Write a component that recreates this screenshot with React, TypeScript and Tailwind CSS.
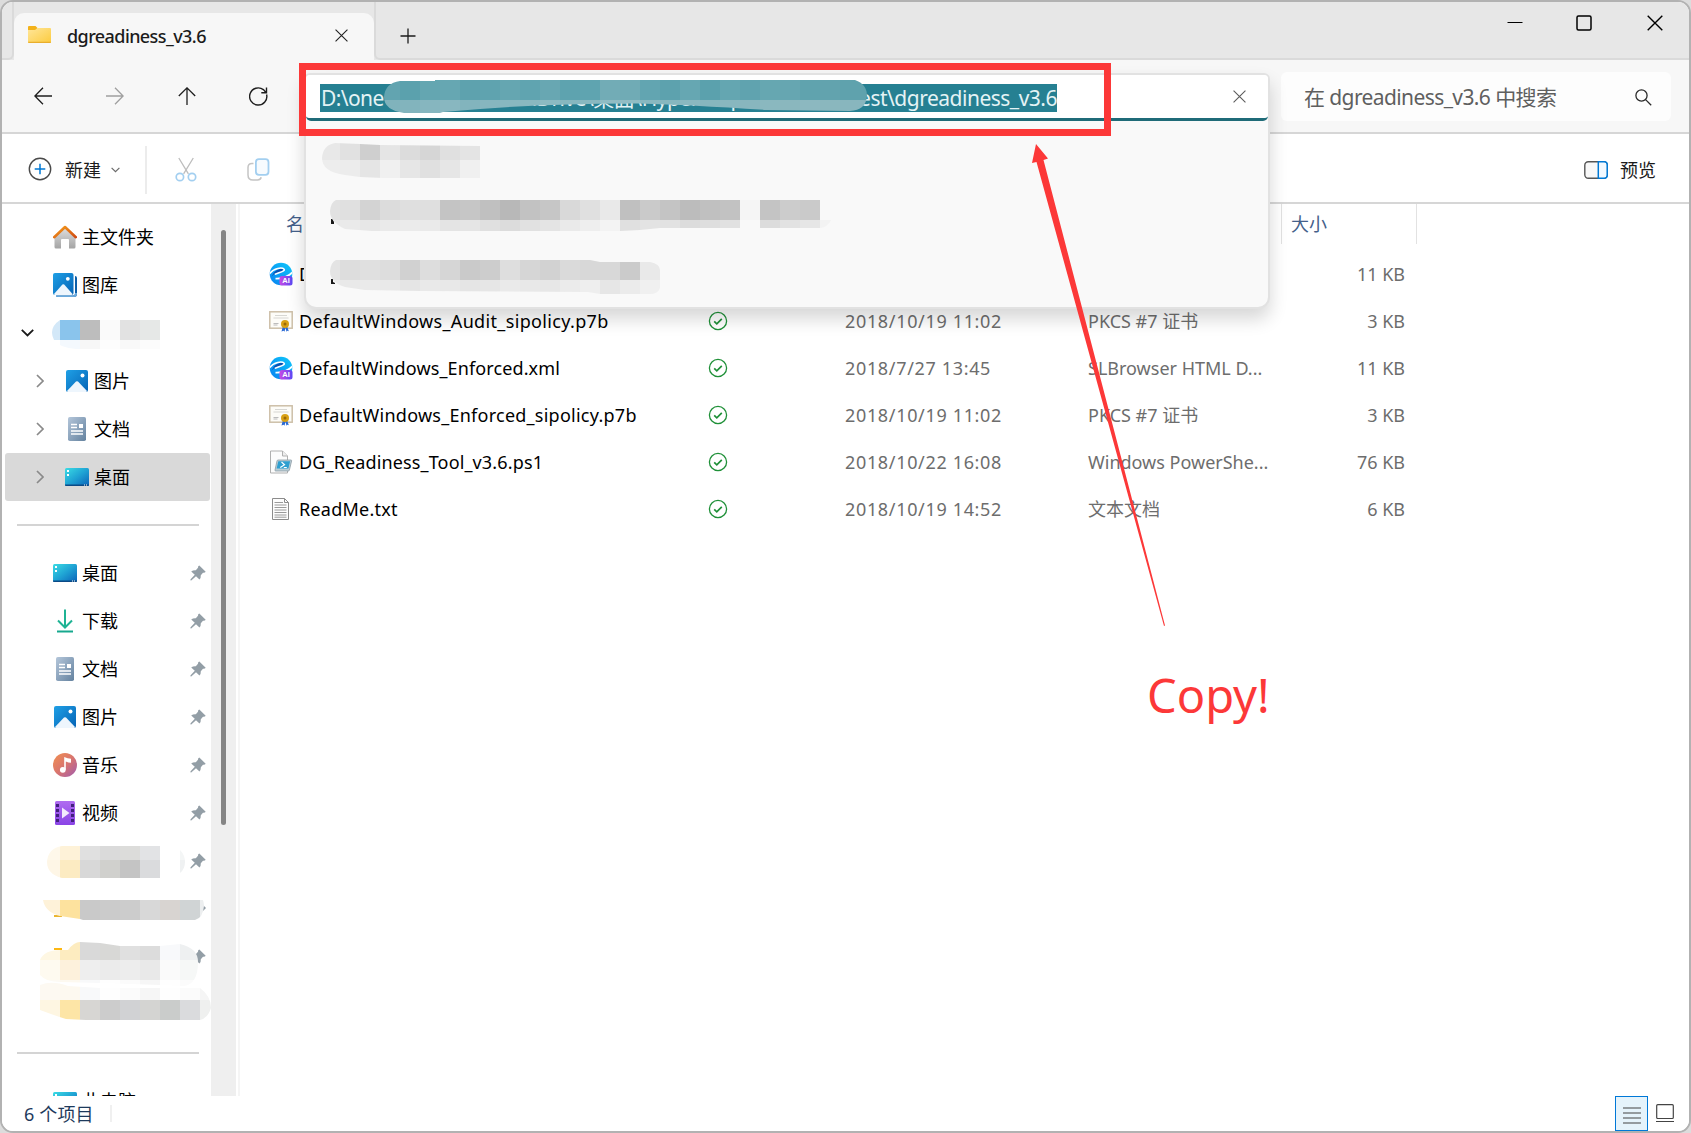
import React from "react";

type Cells = { x: number; y: number; c: string[] };

/* Pixelated redaction: 20px cells clipped to a brush outline. */
function Mosaic({ id, clip, rows }: { id: string; clip: string; rows: Cells[] }) {
  return (
    <g>
      <clipPath id={id}>
        <path d={clip} />
      </clipPath>
      <g clipPath={`url(#${id})`} shapeRendering="crispEdges">
        {rows.map((r) =>
          r.c.map((c, i) => (
            <rect key={`${r.y}-${i}`} x={r.x + i * 20} y={r.y} width={20} height={20} fill={`#${c}`} />
          ))
        )}
      </g>
    </g>
  );
}

const DesktopIcon = () => (
  <svg width="24" height="24" viewBox="0 0 24 24">
    <defs>
      <linearGradient id="desk" x1="0" y1="0" x2="1" y2="1">
        <stop offset="0" stopColor="#3bdce4" />
        <stop offset=".5" stopColor="#1fa3d4" />
        <stop offset="1" stopColor="#0a62b8" />
      </linearGradient>
    </defs>
    <rect x="0" y="3" width="24" height="18" rx="1.5" fill="url(#desk)" />
    <path d="M0 19.6h24v.4q0 1-1 1H1q-1 0-1-1z" fill="#0b4a86" />
    <path d="M2 5h2v2H2zM2 9h2v2H2z" fill="#fff" />
    <path d="M19 20h1M21 20h1" stroke="#fff" strokeWidth="1" />
  </svg>
);

const PictureIcon = () => (
  <svg width="24" height="24" viewBox="0 0 24 24">
    <defs>
      <linearGradient id="pic" x1="0" y1="0" x2="1" y2="1">
        <stop offset="0" stopColor="#1fa0e6" />
        <stop offset="1" stopColor="#0563b5" />
      </linearGradient>
    </defs>
    <rect x="1" y="1" width="22" height="22" rx="2" fill="url(#pic)" />
    <path d="M2 22 11 12.6q1-.9 2 0L22 22q-.4 1-1 1H3q-.6 0-1-1z" fill="#eef6fd" />
    <circle cx="17.5" cy="6.5" r="2" fill="#fff" />
  </svg>
);

const GalleryIcon = () => (
  <svg width="24" height="24" viewBox="0 0 24 24">
    <path d="M22 3q2 .2 2 2v16q0 3-3 3H5q-2 0-2-1.500h17q2 0 2-2z" fill="#0c5ea8" />
    <path d="M3 22.500h17q2 0 2-2V20h2v1q0 3-3 3H5q-2 0-2-1.500z" fill="#6aa9dc" />
    <rect x="0" y="0" width="20.500" height="22" rx="2" fill="url(#pic)" />
    <path d="M1 21 9.400 11.600q.9-.8 1.800 0L19.500 21q-.4 1-1 1H2q-.6 0-1-1z" fill="#eef6fd" />
    <circle cx="14.800" cy="5.800" r="1.900" fill="#fff" />
  </svg>
);

const DocIcon = () => (
  <svg width="24" height="24" viewBox="0 0 24 24">
    <defs>
      <linearGradient id="doc" x1="0" y1="0" x2="1" y2="1">
        <stop offset="0" stopColor="#b4c6da" />
        <stop offset="1" stopColor="#64829f" />
      </linearGradient>
    </defs>
    <rect x="3" y="0" width="18" height="24" rx="1.800" fill="url(#doc)" />
    <path d="M6 7.500h6M6 10.500h6M6 14h12M6 17h12" stroke="#fff" strokeWidth="1.300" />
    <rect x="14" y="7" width="4" height="4" fill="#fff" />
  </svg>
);

const HomeIcon = () => (
  <svg width="24" height="24" viewBox="0 0 24 24">
    <defs>
      <linearGradient id="homeb" x1="0" y1="0" x2="0" y2="1">
        <stop offset="0" stopColor="#dedede" />
        <stop offset="1" stopColor="#a4a4a4" />
      </linearGradient>
      <linearGradient id="homer" x1="0" y1="0" x2="1" y2="1">
        <stop offset="0" stopColor="#f6a01c" />
        <stop offset="1" stopColor="#d04a12" />
      </linearGradient>
    </defs>
    <path d="M1.500 11.500 12 3l10.500 8.500V22q0 1.500-1.500 1.500h-5V15q0-1-1-1H9q-1 0-1 1v8.500H3Q1.500 23.500 1.500 22z" fill="url(#homeb)" />
    <path d="M1.200 12.200 12 2l10.800 10.200" fill="none" stroke="url(#homer)" strokeWidth="2.600" strokeLinecap="round" strokeLinejoin="round" />
  </svg>
);

const DownloadIcon = () => (
  <svg width="24" height="24" viewBox="0 0 24 24" fill="none" strokeWidth="2">
    <path d="M12 .500V18M5 11.500l7 7 7-7" stroke="#1fb394" />
    <path d="M4 22.500h16" stroke="#17a88e" />
  </svg>
);

const MusicIcon = () => (
  <svg width="24" height="24" viewBox="0 0 24 24">
    <defs>
      <linearGradient id="mus" x1="0" y1="0" x2="1" y2="1">
        <stop offset="0" stopColor="#f29050" />
        <stop offset=".5" stopColor="#d9756e" />
        <stop offset="1" stopColor="#a05bb0" />
      </linearGradient>
    </defs>
    <circle cx="12" cy="12" r="12" fill="url(#mus)" />
    <circle cx="9.800" cy="16.800" r="2.900" fill="#fff" />
    <path d="M11.200 4q3.500 1.600 6.800 1.700v4q-2.600 0-5.200-1.200v8.300h-1.600z" fill="#fff" />
  </svg>
);

const VideoIcon = () => (
  <svg width="24" height="24" viewBox="0 0 24 24">
    <defs>
      <linearGradient id="vid" x1="0" y1="0" x2="0" y2="1">
        <stop offset="0" stopColor="#b06cf0" />
        <stop offset="1" stopColor="#8a44e6" />
      </linearGradient>
    </defs>
    <rect x="2" y="0" width="20" height="24" rx="1.500" fill="url(#vid)" />
    <path d="M3 3h3v3H3zM3 8h3v3H3zM3 13h3v3H3zM3 18h3v3H3zM18 3h3v3h-3zM18 8h3v3h-3zM18 13h3v3h-3zM18 18h3v3h-3z" fill="#43207e" />
    <path d="M9 6.500v11l7.500-5.500z" fill="#f2eafc" />
  </svg>
);

const Pin = () => (
  <svg width="16" height="16" viewBox="0 0 16 16">
    <path d="M9.300.600l6.400 6.200q-.7 1.200-2.700 1l-2.200 2.400q.2 2.800-1.300 4.400L6 11.300l-4.800 4.300-.9-.4.300-.9 4.200-4.500-3.600-3.200Q3 5 5.800 5.200L8 2.800Q7.800 1.200 9.300.600z" fill="#939ea6" />
  </svg>
);

const BrowserIcon = () => (
  <svg width="24" height="24" viewBox="0 0 24 24">
    <defs>
      <linearGradient id="br" x1="0" y1="1" x2="1" y2="0">
        <stop offset="0" stopColor="#0a7ff0" />
        <stop offset=".4" stopColor="#0a9cf4" />
        <stop offset="1" stopColor="#10ccfc" />
      </linearGradient>
      <linearGradient id="ai" x1="0" y1="0" x2="1" y2="0">
        <stop offset="0" stopColor="#c94ae4" />
        <stop offset="1" stopColor="#5a48f4" />
      </linearGradient>
      <clipPath id="ball"><circle cx="12" cy="12" r="11.300" /></clipPath>
    </defs>
    <g clipPath="url(#ball)">
      <rect width="24" height="24" fill="url(#br)" />
      <path d="M5 10.500Q9 6.500 13.500 6.800q2 .4.500 1.700-2 1.500-6 2.600-4 1.400-5.500 3.600z" fill="#0a50b4" />
      <path d="M.5 11.800C5 6 13 5 15.200 7.300 16.500 9.300 9 10.600 5.800 12.300" fill="none" stroke="#fff" strokeWidth="1.500" />
      <path d="M6.500 16.600C14 17 19.500 14.500 24.500 9.500" fill="none" stroke="#fff" strokeWidth="1.800" />
    </g>
    <rect x="10.500" y="14" width="13" height="9.500" rx="2.500" fill="url(#ai)" />
    <text x="17" y="21.400" fontSize="7.500" fontWeight="700" fill="#fff" textAnchor="middle" fontFamily="Liberation Sans, sans-serif">AI</text>
  </svg>
);

const CertIcon = () => (
  <svg width="24" height="24" viewBox="0 0 24 24">
    <rect x=".8" y="2.800" width="22.400" height="16.400" fill="#fdfcf8" stroke="#cdbfa8" strokeWidth="1.500" />
    <path d="M6 6.500h12M4.500 9h15" stroke="#d2d2ce" strokeWidth=".9" />
    <path d="M4.500 14.500h5M4.500 16h4" stroke="#b4b4b4" strokeWidth=".9" />
    <path d="M14 17l-1.500 5.500 2.200-.8.8 1 1-4 1 4 .8-1 1.500.5L18 17z" fill="#2a6ad4" />
    <circle cx="16" cy="15" r="4" fill="#d9a115" />
    <circle cx="16" cy="15" r="1.500" fill="#9c6a06" />
  </svg>
);

const PsIcon = () => (
  <svg width="24" height="24" viewBox="0 0 24 24">
    <path d="M1.500 1h12l5 5v17h-17z" fill="#fcfcfc" stroke="#b0b0b0" />
    <path d="M13.500 1v5h5" fill="#eee" stroke="#b0b0b0" />
    <path d="M9 10h13q.8 0 .6.900l-2.200 9.200q-.2.900-1 .9H6.600q-.8 0-.6-.9l2-9.200q.2-.9 1-.9z" fill="#b9cdd6" stroke="#8e9ca4" strokeWidth=".8" />
    <path d="M9.300 11.200h11.800l-1.700 7.300H7.600z" fill="#2f9fd0" />
    <path d="M12.500 12l3 2.700-4.200 2.800M14.800 17.500h3" fill="none" stroke="#fff" strokeWidth="1.200" />
  </svg>
);

const TxtIcon = () => (
  <svg width="24" height="24" viewBox="0 0 24 24">
    <path d="M3.500 1.500h12l4 4v17h-16z" fill="#fdfdfd" stroke="#8c8c8c" />
    <path d="M15.500 1.500v4h4" fill="none" stroke="#8c8c8c" />
    <path d="M5.500 5.500h8.500M5.500 8h12M5.500 10.500h12M5.500 13h12M5.500 15.500h12M5.500 18h12M5.500 20.200h12" stroke="#9a9a9a" strokeWidth="1" />
  </svg>
);

const Check = () => (
  <svg width="20" height="20" viewBox="0 0 20 20" fill="none" stroke="#1f9038">
    <circle cx="10" cy="10" r="8.600" strokeWidth="1.300" />
    <path d="M6.200 10.300l2.600 2.500 5-5" strokeWidth="1.700" />
  </svg>
);

const Cross = ({ s, c }: { s: number; c: string }) => (
  <svg width={s} height={s} viewBox="0 0 14 14" fill="none" stroke={c} strokeWidth="1.200">
    <path d="M.6.600l12.800 12.800M13.400.600L.6 13.400" />
  </svg>
);

const Chevron = () => (
  <svg width="8" height="14" viewBox="0 0 8 14" fill="none" stroke="#8a8a8a" strokeWidth="1.700">
    <path d="M1 1l6 6-6 6" />
  </svg>
);

function TreeRow({ icon, label, selected }: { icon: React.ReactNode; label: string; selected?: boolean }) {
  return (
    <div className={`ml-[3px] mr-px flex h-12 shrink-0 items-center rounded-[3px] pl-[31px] ${selected ? "bg-[#d9d9d9]" : ""}`}>
      <Chevron />
      <span className="ml-[21px] mr-[5px]">{icon}</span>
      <span>{label}</span>
    </div>
  );
}

function QuickRow({ icon, label, pin }: { icon?: React.ReactNode; label?: string; pin?: boolean }) {
  return (
    <div className="flex h-12 shrink-0 items-center pl-[51px] pr-[5px]">
      <span className="mr-[5px] w-6">{icon}</span>
      <span className="flex-1">{label}</span>
      {pin && <Pin />}
    </div>
  );
}

const Divider = () => (
  <div className="flex h-12 shrink-0 items-center pl-[15px] pr-[12px]">
    <div className="h-[2px] w-full bg-[#d4d4d4]" />
  </div>
);

const files = [
  { icon: <BrowserIcon />, name: "DefaultWindows_Audit.xml", fit: "tracking-[0.15px]", date: "2018/7/27 13:45", type: "SLBrowser HTML D...", size: "11 KB" },
  { icon: <CertIcon />, name: "DefaultWindows_Audit_sipolicy.p7b", fit: "tracking-[0.34px]", date: "2018/10/19 11:02", type: "PKCS #7 证书", size: "3 KB" },
  { icon: <BrowserIcon />, name: "DefaultWindows_Enforced.xml", fit: "tracking-[0.12px]", date: "2018/7/27 13:45", type: "SLBrowser HTML D...", size: "11 KB" },
  { icon: <CertIcon />, name: "DefaultWindows_Enforced_sipolicy.p7b", fit: "tracking-[0.25px]", date: "2018/10/19 11:02", type: "PKCS #7 证书", size: "3 KB" },
  { icon: <PsIcon />, name: "DG_Readiness_Tool_v3.6.ps1", fit: "tracking-[0.14px]", date: "2018/10/22 16:08", type: "Windows PowerShe...", size: "76 KB" },
  { icon: <TxtIcon />, name: "ReadMe.txt", fit: "tracking-[0.25px]", date: "2018/10/19 14:52", type: "文本文档", size: "6 KB" },
];

const g = (s: string) => s.split(" ").map((v) => v + v + v);

function TabStrip() {
  return (
    <div className="flex h-[58px] shrink-0 bg-[#e7e7e7]">
      <div className="w-3 rounded-br-[6px] border-b-2 border-r-2 border-[#dadada]" />
      <div className="mt-[11px] flex w-[360px] items-center rounded-t-[10px] bg-[#f7f7f7] pb-[3px] pl-[14px] pr-[26px]">
        <svg width="24" height="20" viewBox="0 0 24 20">
          <defs>
            <linearGradient id="fold" x1="0" y1="0" x2="1" y2="1">
              <stop offset="0" stopColor="#ffe69a" />
              <stop offset="1" stopColor="#fccb3e" />
            </linearGradient>
          </defs>
          <path d="M0 2q0-1 1-1h6.500l2 2-2 3H0z" fill="#f3b21a" />
          <path d="M0 5h7l2.500-2H22q1 0 1 1v13q0 1-1 1H1q-1 0-1-1z" fill="url(#fold)" />
          <path d="M0 16.700h23q0 1.300-1 1.300H1q-1 0-1-1.300z" fill="#e9ae2c" />
        </svg>
        <span className="ml-[15px] mt-px flex-1 font-medium tracking-[-0.58px] text-[#1b1b1b]">dgreadiness_v3.6</span>
        <Cross s={13} c="#222" />
      </div>
      <div className="flex flex-1 rounded-bl-[6px] border-b-2 border-l-2 border-[#dadada]">
        <svg className="ml-[24px] mt-[26px]" width="16" height="16" viewBox="0 0 16 16" stroke="#1b1b1b" strokeWidth="1.300">
          <path d="M8 .500v15M.500 8h15" />
        </svg>
        <div className="ml-auto mr-[26px] mt-[13px] flex h-4 items-center">
          <svg width="16" height="16" viewBox="0 0 16 16"><path d="M.500 7.500h15" stroke="#000" /></svg>
          <svg className="ml-[53px]" width="16" height="16" viewBox="0 0 16 16"><rect x="1" y="1" width="14" height="14" rx="1.500" fill="none" stroke="#000" strokeWidth="1.500" /></svg>
          <svg className="ml-[55px]" width="16" height="16" viewBox="0 0 16 16"><path d="M.7.700l14.600 14.600M15.300.700L.7 15.300" stroke="#000" strokeWidth="1.400" /></svg>
        </div>
      </div>
    </div>
  );
}

function AddressBox() {
  return (
    <div className="relative z-20 ml-[35px] h-[48px] w-[966px] shrink-0">
      <div className="absolute inset-x-0 top-0 h-[236px] overflow-hidden rounded-t-[6px] rounded-b-[12px] border-2 border-[#e2e2e2] bg-[#f9f9f9] shadow-[0_10px_18px_rgba(0,0,0,0.16)]">
        <div className="flex h-[46px] items-center rounded-b-[5px] border-b-[3px] border-[#1f6b78] bg-white pl-[14px] pr-[22px]">
          <div className="mt-[2px] flex h-7 w-[737px] items-center overflow-hidden whitespace-nowrap bg-[#268092] pl-px text-[21px] text-[#e4f3f5]">
            <span className="w-[213px] tracking-[-0.6px]">D:\one</span>
            <span className="w-[201px] tracking-[-0.5px]">iDrive\桌面\Hyper-</span>
            <span className="w-[130px]">p</span>
            <span className="tracking-[-0.5px]">est\dgreadiness_v3.6</span>
          </div>
          <div className="ml-auto"><Cross s={13} c="#5c5c5c" /></div>
        </div>
      </div>
      {/* redactions over the path and the history entries */}
      <svg className="absolute left-0 top-0" width="600" height="236" viewBox="304 73 600 236">
        <Mosaic
          id="m-path"
          clip="M400 81L435 81L435 80L855 80Q867 84 867 96Q866 110 850 111L767 110Q690 105 640 103.500Q540 103 443 112L440 113L404 113Q384 110 384 97Q385 83 400 81Z"
          rows={[
            { x: 380, y: 80, c: "62a4b0 5ba1ad 64a6b1 66a7b2 5ea2ae 5fa3af 65a6b1 60a4b0 68a7b2 5ea3af 5fa4b0 72acb6 70abb5 62a5b1 5da2ae 66a7b2 5ba1ad 64a6b1 60a3af 66a7b1 66a6b1 60a3ae 62a3ae 5fa2ad 5fa2ad".split(" ") },
            { x: 380, y: 100, c: "80b3bc 82b4bd 86b6bf 88b7c0 82b4bd 86b6bf 88b8c0 8ab8c0 8cbac2 86b7bf 88b8c0 90bcc4 90bcc4 88b8c0 86b7bf 8ab8c0 86b6be 88b7bf 88b6be 8ab8bf 8ab7be 8cb8c0 8ab7be 88b6be 88b6be".split(" ") },
          ]}
        />
        <Mosaic
          id="m-h1"
          clip="M335 143L360 144L380 145L480 146V178H383L360 177L345 175Q322 172 322 158Q323 145 335 143Z"
          rows={[
            { x: 320, y: 140, c: g("e8 e1 cf e5 dc d6 e0 e4") },
            { x: 320, y: 160, c: g("ed ec e5 f0 e6 e0 e6 f0") },
          ]}
        />
        <path d="M331 219v5h3v-2l-1.500-3zM331 279v5h4v-1l-2-1v-3z" fill="#1a1a1a" />
        <Mosaic
          id="m-h2"
          clip="M336 200H820V220H831Q828 227 820 228L660 228L640 230L620 231H372L345 229Q330 222 330 211Q331 202 336 200Z"
          rows={[
            { x: 320, y: 200, c: g("e2 e0 d3 dc df df c4 c6 c0 b8 c2 c6 d9 e0 e9 c0 ca c4 bc c0 c2 f5 c4 cc ca f8") },
            { x: 320, y: 220, c: g("e8 ea e7 ea eb ea e4 e5 e0 dc e1 e4 ea ee f3 e0 e3 e2 dc de e1 f9 dc e2 e6 f3") },
          ]}
        />
        <Mosaic
          id="m-h3"
          clip="M336 260H590L600 262H650Q660 264 660 270V288Q658 294 650 294H600L588 292L420 291L365 290L345 287Q330 282 330 271Q331 262 336 260Z"
          rows={[
            { x: 320, y: 260, c: g("e4 dd e0 dd d1 dd d6 ca cd de d6 d2 da d8 d8 cb e9") },
            { x: 320, y: 280, c: g("ec e9 ea e9 e5 e9 e8 e5 e6 ea e8 e7 eb ee e6 eb f0") },
          ]}
        />
      </svg>
    </div>
  );
}

function NavBar() {
  return (
    <div className="flex h-[74px] shrink-0 border-b-2 border-[#d6d6d6] bg-[#f7f7f7] pt-[13px]">
      <div className="mt-[-1px] flex h-[48px] items-center pl-[32px]">
        <svg width="18" height="18" viewBox="0 0 18 18" fill="none" stroke="#1f1f1f" strokeWidth="1.300"><path d="M9 .8L.9 9 9 17.200M.9 9H18" /></svg>
        <svg className="ml-[54px]" width="18" height="18" viewBox="0 0 18 18" fill="none" stroke="#a0a0a0" strokeWidth="1.300"><path d="M9 .8L17.100 9 9 17.200M17.100 9H0" /></svg>
        <svg className="ml-[54px]" width="18" height="18" viewBox="0 0 18 18" fill="none" stroke="#1f1f1f" strokeWidth="1.300"><path d="M.8 9L9 .900 17.200 9M9 .900V18" /></svg>
        <svg className="ml-[53px] mt-px" width="19" height="19" viewBox="0 0 19 19" fill="none" stroke="#1f1f1f" strokeWidth="1.400"><path d="M17.600 7.500a8.600 8.600 0 1 1-3.200-4.900l2.600 2.800M17.500 .500v5.200h-5.200" /></svg>
      </div>
      <div className="w-px shrink-0" />
      <AddressBox />
      <div className="ml-[11px] mt-[-1px] flex h-[49px] w-[390px] items-center rounded-[6px] bg-[#fdfdfd] pl-[23px] pr-[19px] text-[21px] text-[#5f5f5f]">
        <span className="flex-1 whitespace-nowrap tracking-[-0.6px]">在 dgreadiness_v3.6 中搜索</span>
        <svg className="mt-[2px]" width="17" height="17" viewBox="0 0 17 17" fill="none" stroke="#2a2a2a" strokeWidth="1.300"><circle cx="6.500" cy="6.500" r="5.600" /><path d="M10.600 10.600l5.600 5.600" /></svg>
      </div>
    </div>
  );
}

function CommandBar() {
  return (
    <div className="flex h-[70px] shrink-0 items-center border-b-2 border-[#d6d6d6] bg-white pl-[26px] pr-[33px]">
      <svg className="mt-[2px]" width="24" height="24" viewBox="0 0 24 24" fill="none">
        <circle cx="12" cy="12" r="10.700" stroke="#4a4a4a" strokeWidth="1.400" />
        <path d="M12 6.700v10.600M6.700 12h10.600" stroke="#0078d4" strokeWidth="1.500" />
      </svg>
      <span className="ml-[13px] mt-[3px]">新建</span>
      <svg className="ml-[10px] mt-[3px]" width="9" height="6" viewBox="0 0 9 6" fill="none" stroke="#6a6a6a" strokeWidth="1.200"><path d="M.6.800l3.900 3.900L8.400.800" /></svg>
      <div className="ml-[25px] mt-[3px] h-12 w-[2px] bg-[#ececec]" />
      <svg className="ml-[28px] mt-[3px]" width="22" height="25" viewBox="0 0 22 25" fill="none">
        <path d="M3.800 1l9.600 15.800M18.300 1L8.600 16.800" stroke="#bdbdbd" strokeWidth="1.300" />
        <circle cx="4.900" cy="20" r="3.700" stroke="#a3cff0" strokeWidth="1.700" />
        <circle cx="17" cy="20" r="3.700" stroke="#a3cff0" strokeWidth="1.700" />
      </svg>
      <svg className="ml-[50px] mt-[3px]" width="23" height="24" viewBox="0 0 23 24" fill="none">
        <path d="M6.500 5.500H5Q1 5.500 1 9.500V17q0 5 5 5h4.500q3 0 3.700-2.700" stroke="#c4c4c4" strokeWidth="1.500" />
        <rect x="8.900" y="1.200" width="12.600" height="15.600" rx="3" stroke="#a3cff0" strokeWidth="1.800" fill="#f7fbfe" />
      </svg>
      <svg className="ml-auto mt-[3px]" width="24" height="18" viewBox="0 0 24 18">
        <rect x=".8" y=".8" width="22.400" height="16.400" rx="3.500" fill="#f8f8f8" stroke="#555" strokeWidth="1.400" />
        <path d="M14.300.800h5.900q3 0 3 3v10.400q0 3-3 3h-5.900z" fill="#f2f9ff" stroke="#0078d4" strokeWidth="1.500" />
      </svg>
      <span className="ml-[12px] mt-[3px]">预览</span>
    </div>
  );
}

function Sidebar() {
  return (
    <div className="relative flex h-full w-[209px] shrink-0 flex-col overflow-hidden pt-[9px] text-black">
      <QuickRow icon={<HomeIcon />} label="主文件夹" />
      <QuickRow icon={<GalleryIcon />} label="图库" />
      <div className="flex h-12 shrink-0 items-center pl-[19px]">
        <svg width="13" height="8" viewBox="0 0 13 8" fill="none" stroke="#1a1a1a" strokeWidth="1.800"><path d="M.8.800l5.700 5.700L12.200.800" /></svg>
      </div>
      <TreeRow icon={<PictureIcon />} label="图片" />
      <TreeRow icon={<DocIcon />} label="文档" />
      <TreeRow icon={<DesktopIcon />} label="桌面" selected />
      <Divider />
      <QuickRow icon={<DesktopIcon />} label="桌面" pin />
      <QuickRow icon={<DownloadIcon />} label="下载" pin />
      <QuickRow icon={<DocIcon />} label="文档" pin />
      <QuickRow icon={<PictureIcon />} label="图片" pin />
      <QuickRow icon={<MusicIcon />} label="音乐" pin />
      <QuickRow icon={<VideoIcon />} label="视频" pin />
      <QuickRow pin />
      <QuickRow />
      <QuickRow pin />
      <QuickRow />
      <Divider />
      <QuickRow icon={<DesktopIcon />} label="此电脑" />
      <svg className="pointer-events-none absolute left-0 top-0" width="209" height="892" viewBox="2 204 209 892">
        <Mosaic
          id="m-s1"
          clip="M60 320H160V349H76Q60 348 54 340Q48 328 60 320Z"
          rows={[
            { x: 40, y: 320, c: "d3e8f8 8ac4ec bdbdbd fafafa e2e2e2 e6e8e7".split(" ") },
            { x: 40, y: 340, c: "ffffff f4f9fe f7f7f7 fdfdfd f9f9f9 fcfcfc".split(" ") },
          ]}
        />
        <Mosaic
          id="m-s2"
          clip="M62 846H160V878H62Q47 874 47 862Q48 848 62 846ZM180 850Q185 855 185 862Q185 869 180 873Z"
          rows={[
            { x: 40, y: 840, c: "fef8ea fef2d8 e0e0e0 dadada dcdcda e2e3e5 ffffff f4f6f6".split(" ") },
            { x: 40, y: 860, c: "fef6e6 fcebc2 d8d8d8 d0d0cd c4c4c4 dadbdd ffffff eff1f2".split(" ") },
          ]}
        />
        <path d="M203 905l3 3-3 3z" fill="#939ea6" />
        <path d="M54 915h8v2h-8z" fill="#eab530" />
        <Mosaic
          id="m-s3"
          clip="M43 900H200V896Q204 900 204 906Q203 918 195 920H83L80 919L60 916Q45 912 43 900Z"
          rows={[{ x: 40, y: 900, c: "fef2d9 fde29e c9c9c9 cbcbcb cccccc d8d8d8 d8d4d1 d0d4d5 eceeef".split(" ") }]}
        />
        <path d="M54 948h8v2h-8zM63 950h4v1.500h-4z" fill="#fcb713" />
        <Mosaic
          id="m-s4"
          clip="M40 975V960Q44 950 60 950L68 950Q74 942 80 942L100 943L120 946L160 946L180 944Q198 948 198 962Q198 984 184 986L160 985L100 983L60 982Q46 982 40 975Z"
          rows={[
            { x: 40, y: 940, c: "fef7e3 fdecc0 d9d9d9 d8d8d6 e0e0e0 dcdcdc f8f9fb eef0f1".split(" ") },
            { x: 40, y: 960, c: "fefaf0 fdf1dc eeeeee ebebeb ededed e9e9e9 fafafa f6f8f7".split(" ") },
            { x: 40, y: 980, c: "fdfaf4 fdf9f0 f8f9fa fefefe fbfbfb f6f6f6 fefefe fbfbfb".split(" ") },
          ]}
        />
        <Mosaic
          id="m-s5"
          clip="M40 985Q52 980 68 986L100 988L200 988Q211 996 211 1008Q208 1018 200 1020H86L66 1019Q50 1014 40 1010Z"
          rows={[
            { x: 40, y: 980, c: "fdf9f2 fdf9f0 f8f9fa fefefe fbfbfb f6f6f6 fefefe fbfbfb f5f5f5".split(" ") },
            { x: 40, y: 1000, c: "fef6e2 fde5a6 d7d6d3 cccccc d1d2d4 d4d4d2 cacccb dadbdd eff0ef".split(" ") },
          ]}
        />
      </svg>
    </div>
  );
}

function FileList() {
  return (
    <div className="flex flex-1 flex-col">
      <div className="flex h-[40px] shrink-0 text-[#44608a]">
        <div className="flex w-[1041px] items-center pl-[46px]">名称</div>
        <div className="flex w-[136px] items-center border-x border-[#e2e2e2] pl-[9px]">大小</div>
      </div>
      <div className="mt-[6px] flex flex-col">
        {files.map((f) => (
          <div key={f.name} className="flex h-[47px] items-center whitespace-nowrap pl-[29px]">
            <span className="w-[30px]">{f.icon}</span>
            <span className={`w-[409px] text-black ${f.fit}`}>{f.name}</span>
            <span className="w-[137px]"><Check /></span>
            <span className="w-[243px] tracking-[0.66px] text-[#6d6d6d]">{f.date}</span>
            <span className="w-[190px] text-[#6d6d6d]">{f.type}</span>
            <span className="w-[127px] text-right text-[#6d6d6d]">{f.size}</span>
          </div>
        ))}
      </div>
    </div>
  );
}

function StatusBar() {
  return (
    <div className="flex h-[37px] shrink-0 bg-white pr-[15px]">
      <span className="mt-[4px] pl-[22px] tracking-[0.15px] text-[#1e3a5c]">6 个项目</span>
      <div className="ml-[16px] mt-[9px] h-[17px] w-[2px] bg-[#f0f0f0]" />
      <div className="ml-auto flex h-[35px] w-[33px] items-center justify-center border border-[#0078d7] bg-[#e5f3fb]">
        <svg className="mt-[3px]" width="18" height="17" viewBox="0 0 18 17" stroke="#444" strokeWidth="1.100"><path d="M0 1h18M0 6h18M0 11h18M0 16h18" /></svg>
      </div>
      <svg className="ml-[8px] mt-[8px]" width="18" height="19" viewBox="0 0 18 19" fill="none" stroke="#444" strokeWidth="1.200">
        <rect x=".7" y=".7" width="16.600" height="13.800" rx="1" />
        <path d="M0 17.500h18" />
      </svg>
    </div>
  );
}

export default function App() {
  return (
    <div className="relative h-[1133px] w-[1691px] overflow-hidden bg-[#dcdcdc] font-['Noto_Sans','Noto_Sans_CJK_SC',sans-serif] text-[18px] leading-[28px] text-[#1b1b1b]">
      <div className="flex h-full w-full flex-col overflow-hidden rounded-[13px] border-2 border-[#b2b2b2] bg-white">
        <TabStrip />
        <NavBar />
        <CommandBar />
        <div className="flex h-[892px] shrink-0">
          <Sidebar />
          <div className="w-[25px] shrink-0 bg-[#efefef] pl-[10px] pt-[26px]">
            <div className="h-[595px] w-[5px] rounded-full bg-[#858585]" />
          </div>
          <div className="ml-[2px] w-[2px] shrink-0 bg-[#f5f5f5]" />
          <FileList />
        </div>
        <StatusBar />
      </div>
      {/* annotations */}
      <div className="absolute left-[299px] top-[63px] z-30 h-[73px] w-[812px] border-[7px] border-[#fc3838]" />
      <svg className="absolute left-[1020px] top-[140px] z-30" width="160" height="490" viewBox="1020 140 160 490">
        <path d="M1036 144L1048 158.500L1043.500 160L1165 625.500L1164 626L1036.500 162L1032 163Z" fill="#fc3838" />
      </svg>
      <div className="absolute left-[1147px] top-[663px] z-30 text-[47px] leading-[64px] text-[#fc3838]">Copy!</div>
    </div>
  );
}
